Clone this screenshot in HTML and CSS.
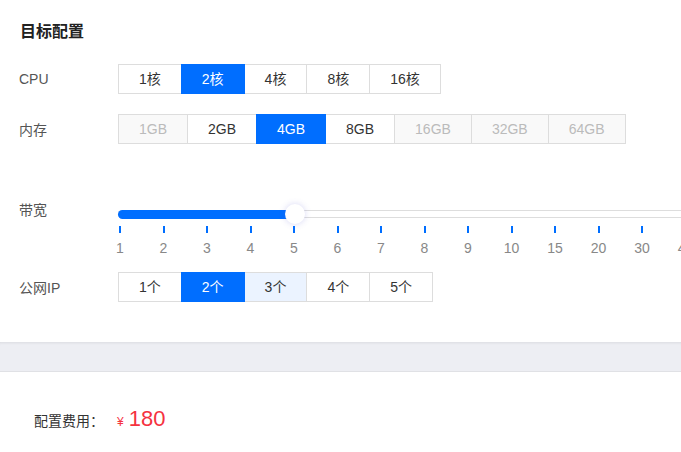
FILE: index.html
```html
<!DOCTYPE html>
<html lang="zh-CN">
<head>
  <meta charset="UTF-8">
  <title>目标配置</title>
  <link rel="stylesheet" href="styles.css">
</head>
<body>
  <div class="panel">
    <h3 class="title">目标配置</h3>

    <div class="row">
      <div class="label">CPU</div>
      <div class="group">
        <span class="opt">1核</span>
        <span class="opt selected">2核</span>
        <span class="opt">4核</span>
        <span class="opt">8核</span>
        <span class="opt">16核</span>
      </div>
    </div>

    <div class="row">
      <div class="label">内存</div>
      <div class="group">
        <span class="opt disabled">1GB</span>
        <span class="opt">2GB</span>
        <span class="opt selected">4GB</span>
        <span class="opt">8GB</span>
        <span class="opt disabled">16GB</span>
        <span class="opt disabled">32GB</span>
        <span class="opt disabled">64GB</span>
      </div>
    </div>

    <div class="slider-row">
      <div class="label slider-label">带宽</div>
      <div class="slider">
        <div class="track">
          <div class="fill"></div>
          <div class="thumb"></div>
        </div>
        <div class="ticks">
          <div class="tick"><i></i><span>1</span></div>
          <div class="tick"><i></i><span>2</span></div>
          <div class="tick"><i></i><span>3</span></div>
          <div class="tick"><i></i><span>4</span></div>
          <div class="tick"><i></i><span>5</span></div>
          <div class="tick"><i></i><span>6</span></div>
          <div class="tick"><i></i><span>7</span></div>
          <div class="tick"><i></i><span>8</span></div>
          <div class="tick"><i></i><span>9</span></div>
          <div class="tick"><i></i><span>10</span></div>
          <div class="tick"><i></i><span>15</span></div>
          <div class="tick"><i></i><span>20</span></div>
          <div class="tick"><i></i><span>30</span></div>
          <div class="tick"><i></i><span>40</span></div>
          <div class="tick"><i></i><span>50</span></div>
        </div>
      </div>
    </div>

    <div class="row ip-row">
      <div class="label">公网IP</div>
      <div class="group">
        <span class="opt">1个</span>
        <span class="opt selected">2个</span>
        <span class="opt hover">3个</span>
        <span class="opt">4个</span>
        <span class="opt">5个</span>
      </div>
    </div>
  </div>

  <div class="band"></div>

  <div class="fee">
    <span class="fee-label">配置费用：</span>
    <span class="yen">¥</span>
    <span class="price">180</span>
  </div>
</body>
</html>
```

FILE: styles.css
```css
body {
  margin: 0;
  font-family: "Liberation Sans", Arial, "Noto Sans CJK SC", sans-serif;
  font-size: 14px;
  color: #333;
  background-color: #fff;
  overflow: hidden;
  width: 681px;
}

.panel {
  padding: 20px 0 40px 19px;
  background-color: #fff;
}

.title {
  margin: 0;
  font-size: 16px;
  line-height: 24px;
  font-weight: bold;
  color: #222;
  padding-left: 1px;
}

.row {
  display: flex;
  align-items: center;
  margin-top: 20px;
}

.label {
  width: 99px;
  flex-shrink: 0;
  color: #555;
}

.group {
  display: flex;
}

.opt {
  position: relative;
  height: 30px;
  line-height: 28px;
  box-sizing: border-box;
  padding: 0 20px;
  border: 1px solid #ddd;
  margin-left: -1px;
  background-color: #fff;
  color: #333;
  white-space: nowrap;
  text-align: center;
}

.opt:first-child {
  margin-left: 0;
}

.opt.selected {
  background-color: #006eff;
  border-color: #006eff;
  color: #fff;
  z-index: 1;
}

.opt.disabled {
  background-color: #f9f9f9;
  color: #bbb;
}

.opt.hover {
  background-color: #ebf3ff;
}

.slider-row {
  display: flex;
  margin-top: 58px;
}

.slider-label {
  line-height: 16px;
}

.slider {
  width: 640px;
  flex-shrink: 0;
  padding-top: 8px;
}

.track {
  position: relative;
  height: 8px;
  box-sizing: border-box;
  border-top: 1px solid #ddd;
  border-bottom: 1px solid #ddd;
  border-left: 1px solid #ddd;
  border-radius: 4px 0 0 4px;
}

.fill {
  position: absolute;
  left: -1px;
  top: -1px;
  width: 176px;
  height: 9px;
  background-color: #006eff;
  border-radius: 5px 0 0 5px;
}

.thumb {
  position: absolute;
  left: 166px;
  top: -7px;
  width: 20px;
  height: 20px;
  border-radius: 50%;
  background-color: #fff;
  box-shadow: 0 0 6px rgba(90, 90, 210, 0.25);
}

.ticks {
  display: flex;
  margin-left: -19.75px;
  margin-top: 8px;
}

.tick {
  width: 43.5px;
  flex-shrink: 0;
  display: flex;
  flex-direction: column;
  align-items: center;
}

.tick i {
  display: block;
  width: 2px;
  height: 7px;
  background-color: #006eff;
}

.tick span {
  margin-top: 7px;
  font-size: 14px;
  line-height: 17px;
  color: #888;
}

.ip-row {
  margin-top: 15px;
}

.band {
  height: 29px;
  background-color: #edeef3;
  border-bottom: 1px solid #e0e1e5;
  box-shadow: inset 0 3px 3px -2px rgba(0, 0, 0, 0.08);
}

.fee {
  display: flex;
  align-items: baseline;
  padding: 32px 0 0 34px;
  line-height: 30px;
}

.fee-label {
  color: #333;
}

.yen {
  margin-left: 13px;
  font-size: 12px;
  color: #f5323f;
}

.price {
  margin-left: 5px;
  font-size: 22px;
  color: #f5323f;
}
```
